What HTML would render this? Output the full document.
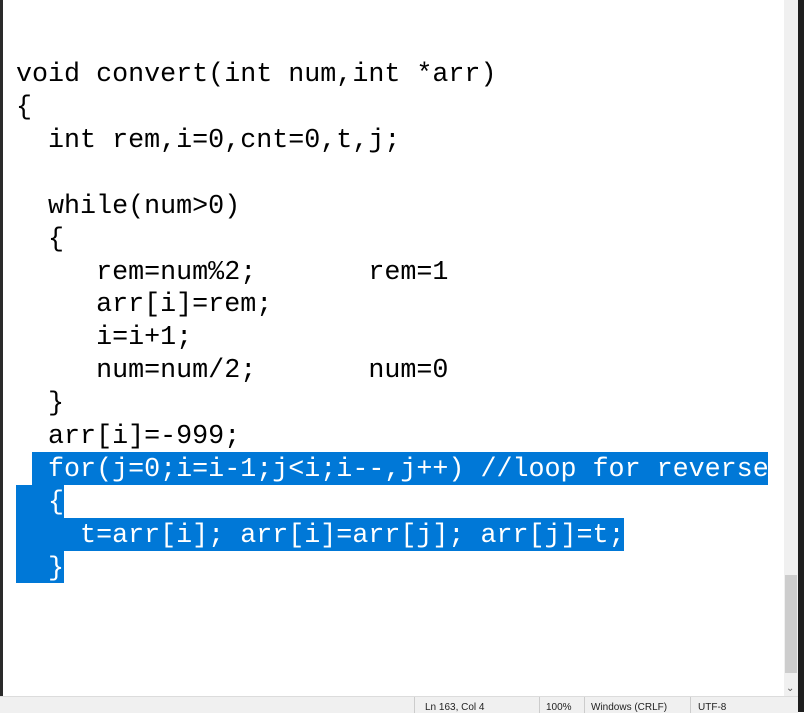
<!DOCTYPE html>
<html><head><style>
body{margin:0;width:804px;height:712px;background:#fff;position:relative;overflow:hidden;font-family:"Liberation Mono",monospace}
.l{position:absolute;left:16px;font-size:26.7px;line-height:33px;height:33px;white-space:pre;color:#000;margin-top:2px}
.sel{position:absolute;background:#0078d7}
.w{color:#fff}
</style></head><body>
<div style="position:absolute;left:0;top:0;width:3px;height:712px;background:#2a2a2a"></div>
<div class="sel" style="left:32px;top:452px;width:736px;height:33px"></div>
<div class="sel" style="left:16px;top:485px;width:48px;height:33px"></div>
<div class="sel" style="left:16px;top:518px;width:608px;height:33px"></div>
<div class="sel" style="left:16px;top:551px;width:48px;height:32px"></div>
<div class="l" style="top:57px">void convert(int num,int *arr)</div>
<div class="l" style="top:90px">{</div>
<div class="l" style="top:123px">  int rem,i=0,cnt=0,t,j;</div>
<div class="l" style="top:189px">  while(num&gt;0)</div>
<div class="l" style="top:222px">  {</div>
<div class="l" style="top:255px">     rem=num%2;       rem=1</div>
<div class="l" style="top:287px">     arr[i]=rem;</div>
<div class="l" style="top:320px">     i=i+1;</div>
<div class="l" style="top:353px">     num=num/2;       num=0</div>
<div class="l" style="top:386px">  }</div>
<div class="l" style="top:419px">  arr[i]=-999;</div>
<div class="l w" style="top:452px">  for(j=0;i=i-1;j&lt;i;i--,j++) //loop for reverse</div>
<div class="l w" style="top:485px">  {</div>
<div class="l w" style="top:518px">    t=arr[i]; arr[i]=arr[j]; arr[j]=t;</div>
<div class="l w" style="top:551px">  }</div>
<div style="position:absolute;left:784px;top:0;width:14px;height:697px;background:#f0f0f0"></div>
<div style="position:absolute;left:785px;top:575px;width:12px;height:98px;background:#cdcdcd"></div>
<div style="position:absolute;left:786px;top:683px;font:10px 'Liberation Sans';color:#555">&#8964;</div>
<div style="position:absolute;left:798px;top:0;width:6px;height:712px;background:#1e1e1e"></div>
<div style="position:absolute;left:0;top:696px;width:798px;height:16px;background:#f0f0f0;border-top:1px solid #dcdcdc;font:10px 'Liberation Sans',sans-serif;color:#222">
<span style="position:absolute;left:414px;top:0;height:16px;border-left:1px solid #ccc"></span>
<span style="position:absolute;left:425px;top:5px">Ln 163, Col 4</span>
<span style="position:absolute;left:539px;top:0;height:16px;border-left:1px solid #ccc"></span>
<span style="position:absolute;left:546px;top:5px">100%</span>
<span style="position:absolute;left:584px;top:0;height:16px;border-left:1px solid #ccc"></span>
<span style="position:absolute;left:591px;top:5px">Windows (CRLF)</span>
<span style="position:absolute;left:690px;top:0;height:16px;border-left:1px solid #ccc"></span>
<span style="position:absolute;left:698px;top:5px">UTF-8</span>
</div>
</body></html>
